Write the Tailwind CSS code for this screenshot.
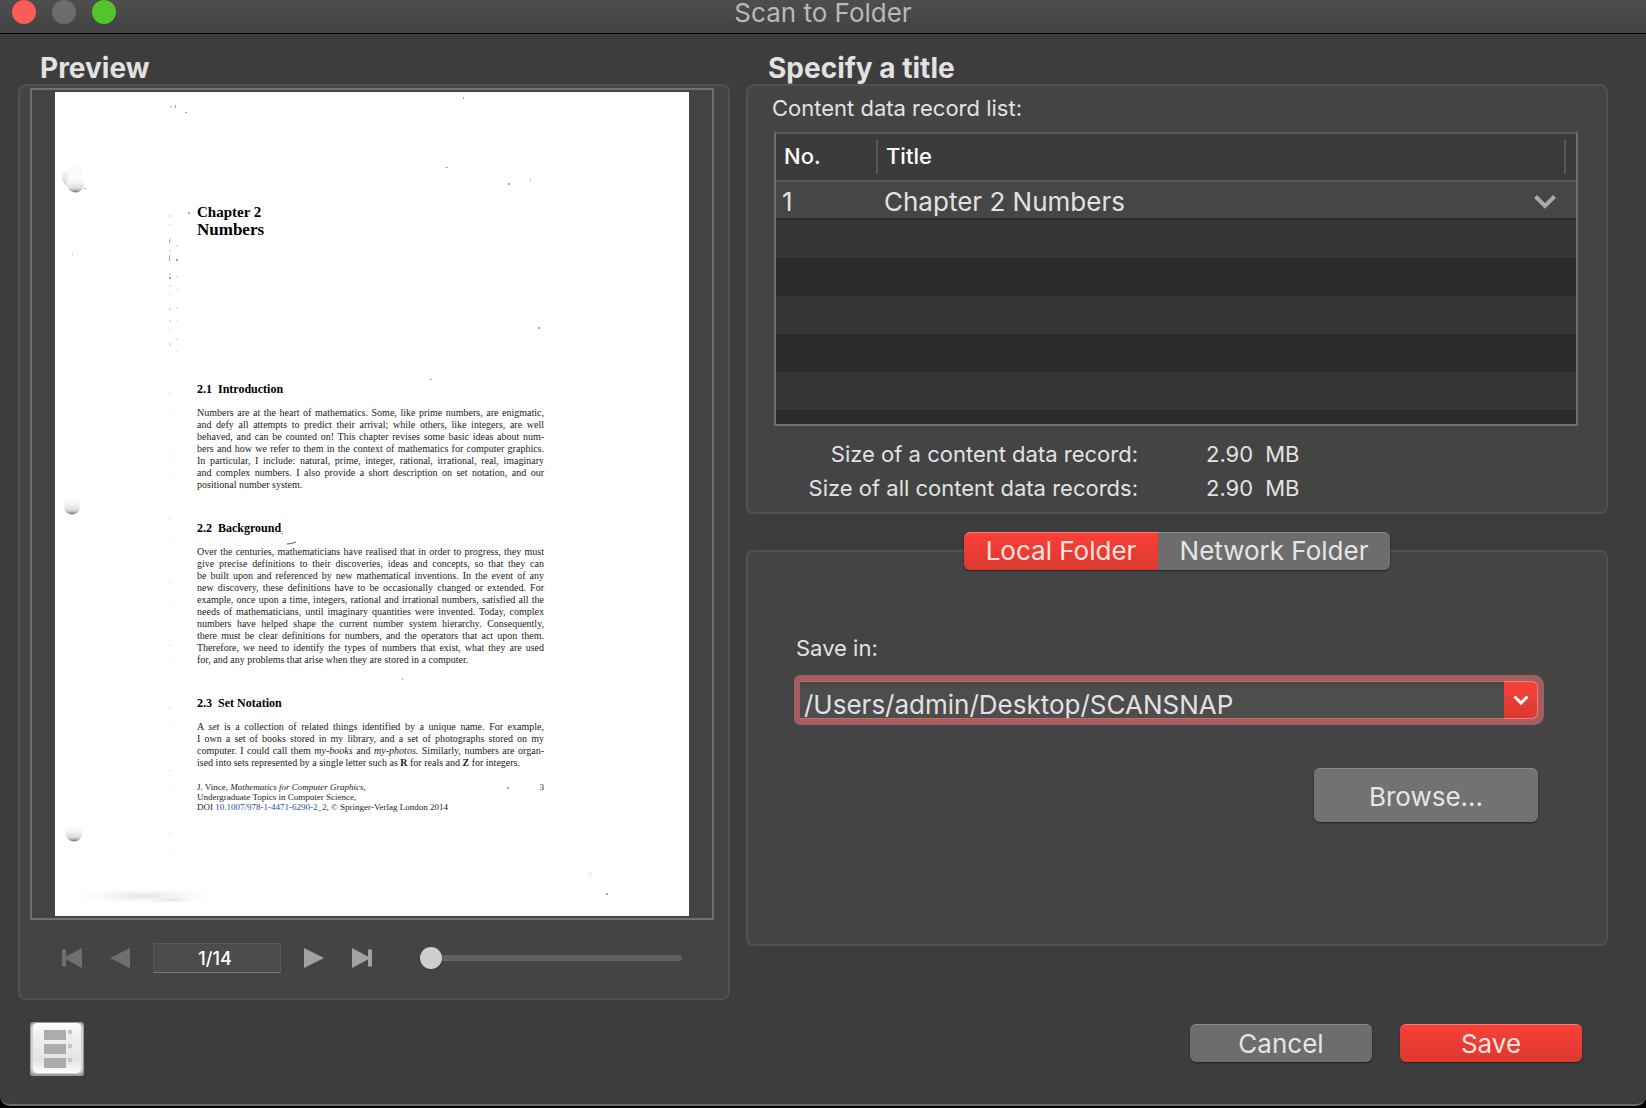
<!DOCTYPE html>
<html lang="en">
<head>
<meta charset="utf-8">
<meta name="viewport" content="width=device-width, initial-scale=1">
<title>Scan to Folder</title>
<script src="https://cdn.jsdelivr.net/npm/@tailwindcss/browser@4"></script>
</head>
<body class="min-h-screen bg-black font-['Inter',sans-serif] text-[#e2e2e2]">
<div class="rounded-b-[10px] border-b-2 border-[#6d6d6d] bg-[#3d3d3d]">

  <!-- Title bar -->
  <header class="grid h-[34px] grid-cols-[1fr_auto_1fr] items-start border-b border-black bg-linear-to-b from-[#4e4e4e] to-[#424242]">
    <div class="flex gap-4 pl-3">
      <button class="size-6 rounded-full bg-[#fb5c55]" aria-label="Close"></button>
      <button class="size-6 rounded-full bg-[#6c6c6c]" aria-label="Minimize" disabled></button>
      <button class="size-6 rounded-full bg-[#53c42b]" aria-label="Zoom"></button>
    </div>
    <h1 class="text-[26px] leading-[26px] text-[#b9b9b9]">Scan to Folder</h1>
  </header>

  <main class="grid grid-cols-[712fr_862fr] items-start gap-4 pt-[18px] pr-[38px] pl-[18px]">

    <!-- Preview -->
    <section>
      <h2 class="pl-[22px] text-[28px] leading-8 font-bold">Preview</h2>
      <div class="rounded-lg border-2 border-[#515151] bg-[#444444] pt-0.5 pr-3.5 pl-2.5">
        <div class="border-2 border-[#707070] px-[23px] py-0.5">
          <article class="relative h-[824px] bg-white pt-[111px] pr-[145px] pl-[142px] font-['Liberation_Serif',serif] text-[10px] leading-3 text-[#222222]">
            <h3 class="text-[15px] leading-[18px] font-bold text-black">Chapter 2</h3>
            <h3 class="text-[17px] leading-[18px] font-bold text-black">Numbers</h3>

            <h4 class="mt-[142px] text-xs leading-4 font-bold whitespace-pre text-black">2.1  Introduction</h4>
            <div class="mt-2.5 whitespace-nowrap">
              <p class="[text-align-last:justify]">Numbers are at the heart of mathematics. Some, like prime numbers, are enigmatic,</p>
              <p class="[text-align-last:justify]">and defy all attempts to predict their arrival; while others, like integers, are well</p>
              <p class="[text-align-last:justify]">behaved, and can be counted on! This chapter revises some basic ideas about num-</p>
              <p class="[text-align-last:justify]">bers and how we refer to them in the context of mathematics for computer graphics.</p>
              <p class="[text-align-last:justify]">In particular, I include: natural, prime, integer, rational, irrational, real, imaginary</p>
              <p class="[text-align-last:justify]">and complex numbers. I also provide a short description on set notation, and our</p>
              <p>positional number system.</p>
            </div>

            <h4 class="mt-[29px] text-xs leading-4 font-bold whitespace-pre text-black">2.2  Background</h4>
            <div class="mt-2.5 whitespace-nowrap">
              <p class="[text-align-last:justify]">Over the centuries, mathematicians have realised that in order to progress, they must</p>
              <p class="[text-align-last:justify]">give precise definitions to their discoveries, ideas and concepts, so that they can</p>
              <p class="[text-align-last:justify]">be built upon and referenced by new mathematical inventions. In the event of any</p>
              <p class="[text-align-last:justify]">new discovery, these definitions have to be occasionally changed or extended. For</p>
              <p class="[text-align-last:justify]">example, once upon a time, integers, rational and irrational numbers, satisfied all the</p>
              <p class="[text-align-last:justify]">needs of mathematicians, until imaginary quantities were invented. Today, complex</p>
              <p class="[text-align-last:justify]">numbers have helped shape the current number system hierarchy. Consequently,</p>
              <p class="[text-align-last:justify]">there must be clear definitions for numbers, and the operators that act upon them.</p>
              <p class="[text-align-last:justify]">Therefore, we need to identify the types of numbers that exist, what they are used</p>
              <p>for, and any problems that arise when they are stored in a computer.</p>
            </div>

            <h4 class="mt-[29px] text-xs leading-4 font-bold whitespace-pre text-black">2.3  Set Notation</h4>
            <div class="mt-2.5 whitespace-nowrap">
              <p class="[text-align-last:justify]">A <i>set</i> is a collection of related things identified by a unique name. For example,</p>
              <p class="[text-align-last:justify]">I own a set of books stored in my library, and a set of photographs stored on my</p>
              <p class="[text-align-last:justify]">computer. I could call them <i>my-books</i> and <i>my-photos</i>. Similarly, numbers are organ-</p>
              <p>ised into sets represented by a single letter such as <b>R</b> for reals and <b>Z</b> for integers.</p>
            </div>

            <footer class="mt-[13px] flex justify-between text-[9px] leading-[10px] whitespace-nowrap">
              <p>J. Vince, <i>Mathematics for Computer Graphics</i>,<br>Undergraduate Topics in Computer Science,<br>DOI <a href="#" class="text-[#2c3fb0]">10.1007/978-1-4471-6290-2_2</a>, © Springer-Verlag London 2014</p>
              <p>3</p>
            </footer>

            <!-- Punch holes, dust and creases of the scanned sheet -->
            <svg class="absolute inset-0 size-full" viewBox="0 0 634 824" preserveAspectRatio="none" aria-hidden="true">
              <defs>
                <linearGradient id="hole" x2="0" y2="1">
                  <stop offset="0" stop-color="#fff"/><stop offset=".4" stop-color="#f4f5f5"/><stop offset=".75" stop-color="#d9dcdb"/><stop offset=".9" stop-color="#a0a4a2"/><stop offset="1" stop-color="#5f6361"/>
                </linearGradient>
                <linearGradient id="dent" x1="1" y1="0" x2="0" y2="1">
                  <stop offset=".4" stop-color="#fcfcfc"/><stop offset="1" stop-color="#cdcfce"/>
                </linearGradient>
                <radialGradient id="smudge"><stop offset="0" stop-color="#dedcd8" stop-opacity=".8"/><stop offset="1" stop-color="#fff" stop-opacity="0"/></radialGradient>
              </defs>
              <circle cx="16" cy="86" r="9" fill="url(#dent)"/>
              <circle cx="20" cy="81" r="7.500" fill="#fafafa"/>
              <circle cx="20.500" cy="92" r="8.500" fill="url(#hole)"/>
              <circle cx="17" cy="414" r="8.500" fill="url(#hole)"/>
              <circle cx="19" cy="741" r="8.500" fill="url(#hole)"/>
              <ellipse cx="90" cy="804" rx="86" ry="9" fill="url(#smudge)"/>
              <ellipse cx="115" cy="808" rx="32" ry="4" fill="url(#smudge)"/>
              <path d="M232 452q4 0 9-2" fill="none" stroke="#555" stroke-width="1"/>
              <g fill="#a9a9a9">
                <path d="M29 96h2v1h-2zM408 5h1v2h-1zM391 75h2v1h-2zM453 91h2v2h-2zM475 87h1v1h-1zM133 120h2v2h-2zM483 235h2v2h-2zM375 287h2v1h-2zM347 586h1v2h-1zM452 695h2v2h-2zM551 801h2v2h-2zM535 781h1v1h-1zM115 14h2v1h-2zM120 13h1v3h-1zM130 20h2v1h-2zM114 148h1v3h-1zM114 163h1v6h-1zM121 167h2v2h-2zM114 185h2v2h-2zM17 162h1v1h-1zM226 441h2v1h-2z"/>
              </g>
              <path d="M115 123v140" stroke="#c6c6c6" stroke-width="1" stroke-dasharray="2 7 1 13 3 9"/>
              <path d="M115 300v500" stroke="#dddddd" stroke-width="1" stroke-dasharray="2 17 1 43"/>
              <path d="M122 153v110" stroke="#cccccc" stroke-width="1" stroke-dasharray="2 11 1 17"/>
            </svg>
          </article>
        </div>

        <div class="mt-[23px] mb-[25px] flex items-center pl-8">
          <button class="mr-7" aria-label="First page" disabled>
            <svg class="size-5 fill-[#6f6f6f]" viewBox="0 0 20 20"><path d="M0 1.500h4v7L20 0v20L4 11.500v7H0z"/></svg>
          </button>
          <button class="mr-[23px]" aria-label="Previous page" disabled>
            <svg class="size-5 fill-[#6f6f6f]" viewBox="0 0 20 20"><path d="M20 0v20L0 10z"/></svg>
          </button>
          <input class="h-[30px] w-32 border border-[#5a5a5a] border-b-[#7c7c7c] bg-[#4c4c4c] pr-1 text-center text-lg font-medium text-white" aria-label="Page" value="1/14">
          <button class="ml-[23px]" aria-label="Next page">
            <svg class="size-5 fill-[#a2a2a2]" viewBox="0 0 20 20"><path d="M0 0v20L20 10z"/></svg>
          </button>
          <button class="ml-7" aria-label="Last page">
            <svg class="size-5 fill-[#a2a2a2]" viewBox="0 0 20 20"><path d="M20 1.500h-4v7L0 0v20l16-8.500v7h4z"/></svg>
          </button>
          <input type="range" min="0" max="100" value="0" aria-label="Zoom" class="mr-8 ml-12 h-[22px] min-w-0 flex-1 appearance-none bg-transparent [&::-webkit-slider-runnable-track]:h-1.5 [&::-webkit-slider-runnable-track]:rounded-full [&::-webkit-slider-runnable-track]:bg-[#616161] [&::-webkit-slider-thumb]:-mt-2 [&::-webkit-slider-thumb]:size-[22px] [&::-webkit-slider-thumb]:appearance-none [&::-webkit-slider-thumb]:rounded-full [&::-webkit-slider-thumb]:bg-[#cecece] [&::-webkit-slider-thumb]:shadow">
        </div>
      </div>
    </section>

    <section>
      <h2 class="pl-[22px] text-[28px] leading-8 font-bold">Specify a title</h2>

      <!-- Record list -->
      <div class="h-[430px] rounded-lg border-2 border-[#515151] bg-[#444444] pr-7 pl-6">
        <p class="pt-2 pb-2.5 text-[22px] leading-7">Content data record list:</p>
        <div class="ml-0.5 h-[294px] overflow-hidden border-2 border-[#707070] border-t-[#585858] bg-[#2b2b2b]">
          <table class="w-full border-separate border-spacing-0 text-left">
            <thead class="bg-[#3b3b3b] text-[22px] leading-7 text-white">
              <tr>
                <th class="h-12 w-[102px] border-b-2 border-[#585858] p-0 font-medium"><div class="h-[34px] border-r-2 border-[#585858] pt-0.5 pl-2">No.</div></th>
                <th class="h-12 border-b-2 border-[#585858] p-0 pr-2.5 font-medium"><div class="h-[34px] border-r-2 border-[#585858] pt-0.5 pl-2">Title</div></th>
              </tr>
            </thead>
            <tbody>
              <tr class="bg-[#464646] text-[26px] leading-8">
                <td class="h-[38px] border-b-2 border-[#2b2b2b] p-0 pt-1 pl-1.5">1</td>
                <td class="h-[38px] border-b-2 border-[#2b2b2b] p-0 pt-1 pr-5 pl-1.5">
                  <div class="flex items-center justify-between">
                    Chapter 2 Numbers
                    <button aria-label="Show titles"><svg class="h-[14px] w-[22px] fill-none stroke-[#aaaaaa] stroke-[4]" viewBox="0 0 22 14"><path d="M1.500 1.500 11 11l9.500-9.500"/></svg></button>
                  </div>
                </td>
              </tr>
              <tr class="bg-[#353535]"><td class="h-[38px] p-0" colspan="2"></td></tr>
              <tr><td class="h-[38px] p-0" colspan="2"></td></tr>
              <tr class="bg-[#353535]"><td class="h-[38px] p-0" colspan="2"></td></tr>
              <tr><td class="h-[38px] p-0" colspan="2"></td></tr>
              <tr class="bg-[#353535]"><td class="h-[38px] p-0" colspan="2"></td></tr>
            </tbody>
          </table>
        </div>
        <dl class="mt-[11px] grid grid-cols-[366px_1fr] gap-x-[68px] text-[22px] leading-[34px]">
          <dt class="text-right whitespace-nowrap">Size of a content data record:</dt>
          <dd class="flex gap-3"><span>2.90</span><span>MB</span></dd>
          <dt class="text-right whitespace-nowrap">Size of all content data records:</dt>
          <dd class="flex gap-3"><span>2.90</span><span>MB</span></dd>
        </dl>
      </div>

      <!-- Destination -->
      <div class="mt-9 flex h-[396px] flex-col rounded-lg border-2 border-[#515151] bg-[#444444] pr-[68px] pl-[46px]">
        <div class="-mt-5 -mr-[22px] flex self-center rounded-md text-[26px] leading-8 shadow-[0_1px_2px_#00000080]">
          <button class="h-[38px] w-[194px] rounded-l-md border-t border-[#f97e78] bg-linear-to-b from-[#fb4037] to-[#da3930] pb-0.5 text-[#ffe3e1]">Local Folder</button>
          <button class="h-[38px] w-[232px] rounded-r-md border-t border-[#8a8a8a] bg-[#6d6d6d] pb-0.5 text-[#e6e6e6]">Network Folder</button>
        </div>
        <label for="save-in" class="mt-16 pl-0.5 text-[22px] leading-7">Save in:</label>
        <div class="mt-[13px] -mr-1.5 flex rounded-l-md rounded-r-[10px] bg-[#a35f5f] p-1.5">
          <input id="save-in" class="h-[38px] min-w-0 flex-1 border-y border-[#c46c6c] bg-linear-to-b from-[#464646] to-[#4d4d4d] to-20% pt-[9px] pl-1 text-[26px] leading-7 outline-none" value="/Users/admin/Desktop/SCANSNAP">
          <button class="flex h-[38px] w-[34px] items-center justify-center rounded-r-md border border-l-0 border-[#f97e78] bg-linear-to-b from-[#fb4037] to-[#da3930]" aria-label="Show folders">
            <svg class="h-[10px] w-4 fill-none stroke-white stroke-[3]" viewBox="0 0 16 10"><path d="M1.500 1.500 8 8l6.500-6.500"/></svg>
          </button>
        </div>
        <button class="mt-[43px] h-[54px] w-56 self-end rounded-md border-t border-[#8a8a8a] bg-[#727272] pt-0.5 text-[26px] text-[#e6e6e6] shadow-[0_1px_2px_#00000080]">Browse...</button>
      </div>
    </section>
  </main>

  <footer class="flex items-start gap-7 pt-[22px] pr-16 pb-7 pl-[30px]">
    <button class="mr-auto" aria-label="Show page list">
      <svg class="size-[54px]" viewBox="0 0 54 54">
        <defs><linearGradient id="key" x2="0" y2="1"><stop offset="0" stop-color="#fff"/><stop offset=".25" stop-color="#efefef"/><stop offset=".75" stop-color="#e4e4e4"/><stop offset="1" stop-color="#fff"/></linearGradient></defs>
        <rect width="54" height="54" rx="3" fill="#9b9b9b"/>
        <rect x="1" y="1" width="52" height="51" rx="5" fill="#d2d2d2"/>
        <rect x="3" y="1" width="48" height="50" rx="5" fill="url(#key)"/>
        <path fill="#acacac" d="M14 8h22v10H14zM14 22h22v10H14zM14 36h22v10H14z"/>
        <path fill="#c4c4c4" d="M38 8h4v4h-4zM38 22h4v4h-4zM38 36h4v4h-4z"/>
      </svg>
    </button>
    <button class="mt-0.5 h-[38px] w-[182px] rounded-md border-t border-[#8a8a8a] bg-[#6d6d6d] text-[26px] leading-8 text-[#e6e6e6] shadow-[0_1px_2px_#00000080]">Cancel</button>
    <button class="mt-0.5 h-[38px] w-[182px] rounded-md border-t border-[#f97e78] bg-linear-to-b from-[#fb4037] to-[#da3930] text-[26px] leading-8 text-[#ffe3e1] shadow-[0_1px_2px_#00000080]">Save</button>
  </footer>
</div>
</body>
</html>
